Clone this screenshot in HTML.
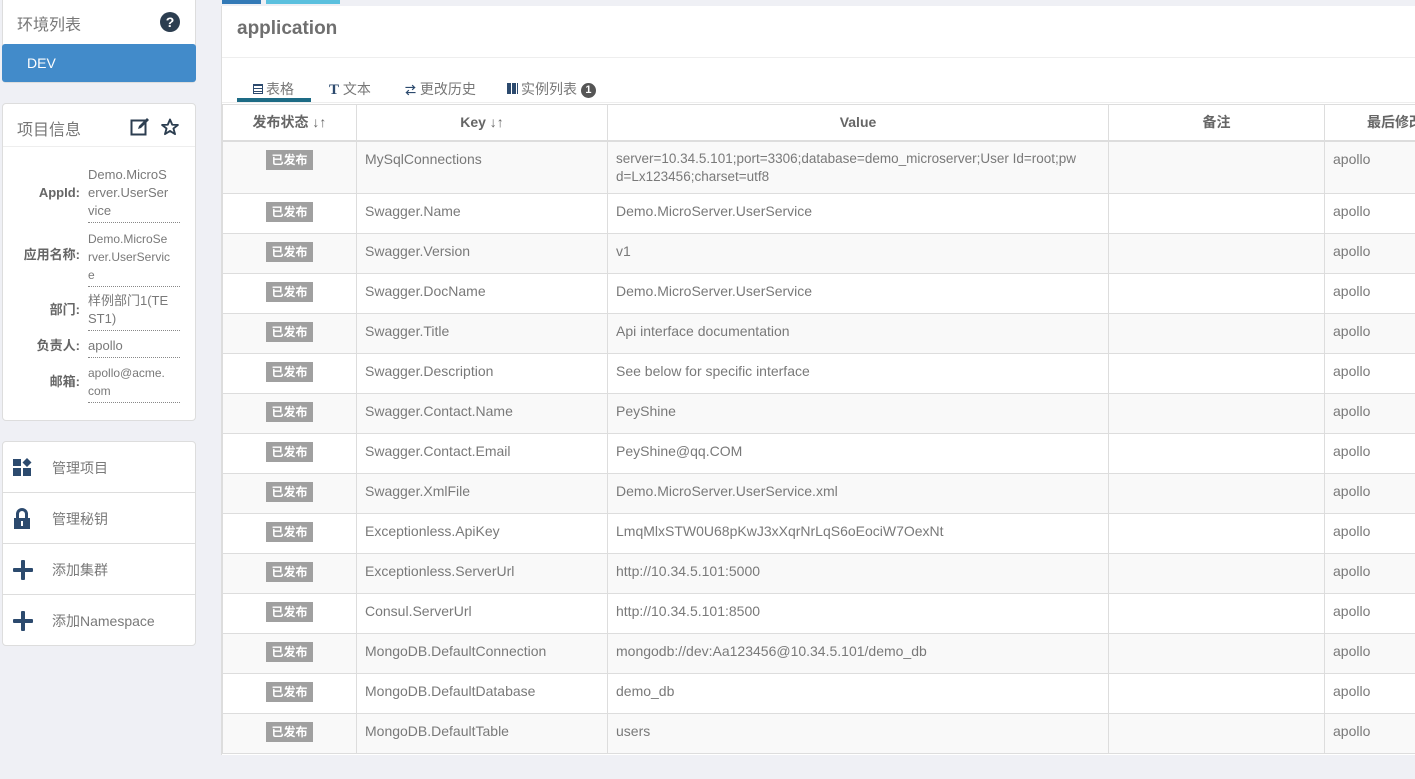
<!DOCTYPE html>
<html><head><meta charset="utf-8"><style>
*{box-sizing:border-box;margin:0;padding:0}
body{width:1415px;height:779px;overflow:hidden;background:#eff0f5;font-family:"Liberation Sans","Noto Sans CJK SC",sans-serif;color:#797979;font-size:14px;position:relative}
.abs{position:absolute}
.panel{position:absolute;background:#fff;border:1px solid #ddd;border-radius:4px}
.tb{position:absolute;left:222px;top:104px;width:1193px;border-collapse:collapse;table-layout:fixed;font-size:14px}
.tb td,.tb th{border:1px solid #ddd;vertical-align:top;padding:0 8px}
.tb th{height:36px;vertical-align:middle;text-align:center;color:#666;font-weight:bold;border-bottom:2px solid #ddd;background:#fff}
.tb td{height:40px;padding-top:8px;line-height:18px}
.tb tr:nth-child(even) td{background:#f9f9f9}
.tb tr:nth-child(odd) td{background:#fff}
.tb td:first-child{text-align:center;padding-top:8px}
.lab{display:inline-block;background:#a0a0a0;color:#fff;font-weight:bold;font-size:12px;padding:2px 5px;line-height:16px}
.info{position:absolute;left:0;width:195px;font-size:13px;line-height:18px}
.info b{position:absolute;right:115px;color:#666;font-weight:bold}
.info span{position:absolute;left:88px;width:92px;border-bottom:1px dotted #888;padding-bottom:2px;white-space:nowrap}
.menu{position:absolute;left:2px;width:194px;height:51px;border-bottom:1px solid #ddd;font-size:14px}
.menu span{position:absolute;left:50px;top:16px}
.menu svg{position:absolute;left:10px;top:15px}
</style></head><body>
<div class="abs" style="left:222px;top:0;width:39px;height:4px;background:#337ab7"></div>
<div class="abs" style="left:266px;top:0;width:74px;height:4px;background:#5bc0de"></div>

<div class="panel" style="left:2px;top:-4px;width:194px;height:87px"></div>
<div class="abs" style="left:17px;top:11px;font-size:16px;color:#777">环境列表</div>
<svg class="abs" style="left:160px;top:12px" width="20" height="20" viewBox="0 0 20 20"><circle cx="10" cy="10" r="10" fill="#2c3e50"/><text x="10" y="15" text-anchor="middle" font-size="14" font-weight="bold" fill="#fff" font-family="Liberation Sans">?</text></svg>
<div class="abs" style="left:2px;top:44px;width:194px;height:38px;background:#428bca;border-radius:3px;color:#fff;font-size:14px;padding:11px 0 0 25px">DEV</div>

<div class="panel" style="left:2px;top:103px;width:194px;height:318px"></div>
<div class="abs" style="left:17px;top:116px;font-size:16px;color:#777">项目信息</div>
<div class="abs" style="left:3px;top:146px;width:192px;height:1px;background:#eee"></div>
<svg class="abs" style="left:130px;top:117px" width="20" height="19" viewBox="0 0 20 19"><rect x="1.5" y="3.5" width="14" height="14" fill="none" stroke="#2c3e50" stroke-width="2"/><path d="M8 12 L9 9 L17 1 L19 3 L11 11 Z" fill="#2c3e50"/></svg>
<svg class="abs" style="left:161px;top:118px" width="18" height="18" viewBox="0 0 24 24"><path d="M12 2 L15 9 L22.5 9.3 L16.6 14 L18.7 21.5 L12 17.2 L5.3 21.5 L7.4 14 L1.5 9.3 L9 9 Z" fill="none" stroke="#2c3e50" stroke-width="2.5" stroke-linejoin="round"/></svg>
<div class="info" style="top:166px"><b style="top:18px">AppId:</b><span style="top:0">Demo.MicroS<br>erver.UserSer<br>vice</span></div>
<div class="info" style="top:230px;font-size:12px"><b style="top:16px;font-size:13px">应用名称:</b><span style="top:0">Demo.MicroSe<br>rver.UserServic<br>e</span></div>
<div class="info" style="top:292px"><b style="top:9px">部门:</b><span style="top:0">样例部门1(TE<br>ST1)</span></div>
<div class="info" style="top:337px"><b style="top:0">负责人:</b><span style="top:0">apollo</span></div>
<div class="info" style="top:364px;font-size:12px"><b style="top:9px;font-size:13px">邮箱:</b><span style="top:0">apollo@acme.<br>com</span></div>

<div class="panel" style="left:2px;top:441px;width:194px;height:205px"></div>
<div class="menu" style="top:442px"><svg width="20" height="20" viewBox="0 0 20 20" fill="#2c4a6e"><rect x="1" y="2" width="8" height="7"/><rect x="1" y="11" width="8" height="8"/><rect x="11" y="11" width="8" height="8"/><path d="M15 1 L19.5 5.5 L15 10 L10.5 5.5 Z"/></svg><span>管理项目</span></div>
<div class="menu" style="top:493px"><svg width="20" height="22" viewBox="0 0 20 22" fill="#2c4a6e"><path d="M4 10 V6 a6 6 0 0 1 12 0 V10 h-3 V6 a3 3 0 0 0 -6 0 V10 Z"/><rect x="2" y="10" width="16" height="11"/><rect x="9" y="13" width="2" height="5" fill="#fff"/></svg><span>管理秘钥</span></div>
<div class="menu" style="top:544px"><svg width="22" height="22" viewBox="0 0 22 22" fill="#2c4a6e"><rect x="9" y="1" width="4" height="20" rx="1"/><rect x="1" y="9" width="20" height="4" rx="1"/></svg><span>添加集群</span></div>
<div class="menu" style="top:595px;border-bottom:none"><svg width="22" height="22" viewBox="0 0 22 22" fill="#2c4a6e"><rect x="9" y="1" width="4" height="20" rx="1"/><rect x="1" y="9" width="20" height="4" rx="1"/></svg><span>添加Namespace</span></div>

<div class="abs" style="left:221px;top:6px;width:1194px;height:749px;background:#fff;border-left:1px solid #ddd"></div>
<div class="abs" style="left:237px;top:18px;font-size:19px;font-weight:bold;color:#6f6f6f">application</div>
<div class="abs" style="left:222px;top:57px;width:1193px;height:1px;background:#eee"></div>
<div class="abs" style="left:222px;top:102px;width:1193px;height:1px;background:#eee"></div>
<div class="abs" style="left:237px;top:98px;width:74px;height:4px;background:#1d6b85"></div>
<div class="abs" style="left:253px;top:79px;font-size:14px;color:#777">
<span style="display:inline-block;width:10px;height:10px;border:1px solid #2c4a6e;background:repeating-linear-gradient(#2c4a6e 0 1px,#fff 1px 3px);margin-right:3px"></span>表格</div>
<div class="abs" style="left:329px;top:79px;font-size:14px;color:#777"><b style="color:#2c4a6e;font-family:'Liberation Serif';font-size:15px">T</b> 文本</div>
<div class="abs" style="left:405px;top:79px;font-size:14px;color:#777"><span style="color:#2c4a6e;font-size:11px;font-weight:bold">⇄</span> 更改历史</div>
<div class="abs" style="left:507px;top:79px;font-size:14px;color:#777"><span style="display:inline-block;width:11px;height:11px;background:repeating-linear-gradient(90deg,#2c4a6e 0 4px,#fff 4px 5px);margin-right:3px"></span>实例列表 <span style="display:inline-block;width:15px;height:15px;border-radius:50%;background:#555;color:#fff;font-size:11px;text-align:center;line-height:15px;font-weight:bold;vertical-align:1px">1</span></div>

<table class="tb">
<colgroup><col style="width:134px"><col style="width:251px"><col style="width:501px"><col style="width:216px"><col style="width:91px"></colgroup>
<tr><th>发布状态 ↓↑</th><th>Key ↓↑</th><th>Value</th><th>备注</th><th style="text-align:left;padding-left:42px;white-space:nowrap;overflow:hidden">最后修改</th></tr>
<tr><td style="height:53px"><span class="lab">已发布</span></td><td>MySqlConnections</td><td style="font-size:13.5px">server=10.34.5.101;port=3306;database=demo_microserver;User Id=root;pw<br>d=Lx123456;charset=utf8</td><td></td><td>apollo</td></tr>
<tr><td><span class="lab">已发布</span></td><td>Swagger.Name</td><td>Demo.MicroServer.UserService</td><td></td><td>apollo</td></tr>
<tr><td><span class="lab">已发布</span></td><td>Swagger.Version</td><td>v1</td><td></td><td>apollo</td></tr>
<tr><td><span class="lab">已发布</span></td><td>Swagger.DocName</td><td>Demo.MicroServer.UserService</td><td></td><td>apollo</td></tr>
<tr><td><span class="lab">已发布</span></td><td>Swagger.Title</td><td>Api interface documentation</td><td></td><td>apollo</td></tr>
<tr><td><span class="lab">已发布</span></td><td>Swagger.Description</td><td>See below for specific interface</td><td></td><td>apollo</td></tr>
<tr><td><span class="lab">已发布</span></td><td>Swagger.Contact.Name</td><td>PeyShine</td><td></td><td>apollo</td></tr>
<tr><td><span class="lab">已发布</span></td><td>Swagger.Contact.Email</td><td>PeyShine@qq.COM</td><td></td><td>apollo</td></tr>
<tr><td><span class="lab">已发布</span></td><td>Swagger.XmlFile</td><td>Demo.MicroServer.UserService.xml</td><td></td><td>apollo</td></tr>
<tr><td><span class="lab">已发布</span></td><td>Exceptionless.ApiKey</td><td>LmqMlxSTW0U68pKwJ3xXqrNrLqS6oEociW7OexNt</td><td></td><td>apollo</td></tr>
<tr><td><span class="lab">已发布</span></td><td>Exceptionless.ServerUrl</td><td>http://10.34.5.101:5000</td><td></td><td>apollo</td></tr>
<tr><td><span class="lab">已发布</span></td><td>Consul.ServerUrl</td><td>http://10.34.5.101:8500</td><td></td><td>apollo</td></tr>
<tr><td><span class="lab">已发布</span></td><td>MongoDB.DefaultConnection</td><td>mongodb://dev:Aa123456@10.34.5.101/demo_db</td><td></td><td>apollo</td></tr>
<tr><td><span class="lab">已发布</span></td><td>MongoDB.DefaultDatabase</td><td>demo_db</td><td></td><td>apollo</td></tr>
<tr><td><span class="lab">已发布</span></td><td>MongoDB.DefaultTable</td><td>users</td><td></td><td>apollo</td></tr>
</table>
</body></html>
